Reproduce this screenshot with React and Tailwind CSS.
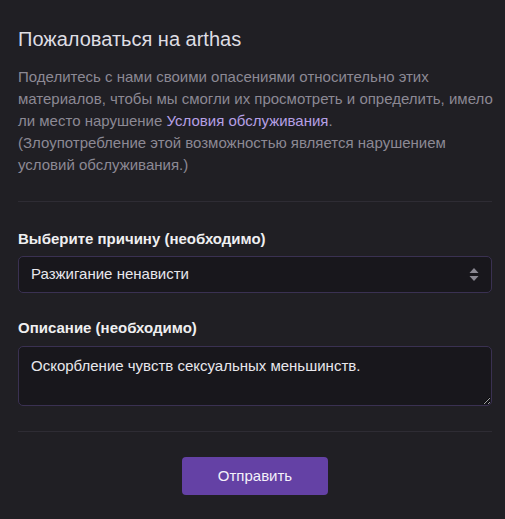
import React, { useState } from 'react';

const reasons = ['Разжигание ненависти', 'Спам', 'Насилие', 'Другое'];

export default function App() {
  const [reason, setReason] = useState(reasons[0]);
  const [text, setText] = useState('Оскорбление чувств сексуальных меньшинств.');

  return (
    <div className="min-h-[519px] bg-[#201f24] pl-[18px] pr-[13px] pt-[26px] pb-6 font-['Liberation_Sans',Arial,sans-serif] scheme-dark">
      <h1 className="text-[20px] leading-[26px] text-[#dedde3]">Пожаловаться на arthas</h1>

      <p className="mt-[14px] -mr-[8px] text-[15px] leading-[22px] text-[#8c8994]">
        Поделитесь с нами своими опасениями относительно этих материалов, чтобы мы смогли их
        просмотреть и определить, имело ли место нарушение{' '}
        <a href="#" className="text-[#b6a0e4]">Условия обслуживания</a>.
        <br />
        (Злоупотребление этой возможностью является нарушением условий обслуживания.)
      </p>

      <div className="mt-[25px] h-px bg-[#2e2c34]" />

      <label className="mt-[27px] block text-[15px] leading-5 font-bold text-[#efeff1]">
        Выберите причину (необходимо)
      </label>
      <div className="relative mt-[7px]">
        <select
          value={reason}
          onChange={(e) => setReason(e.target.value)}
          className="h-[37px] w-full appearance-none rounded-[5px] border border-[#3a3152] bg-[#18171c] px-3 text-[15px] text-[#e8e7ec] outline-none"
        >
          {reasons.map((r) => (
            <option key={r}>{r}</option>
          ))}
        </select>
        <svg className="pointer-events-none absolute right-[13px] top-[12px]" width="10" height="13" viewBox="0 0 10 13">
          <path d="M5 0 L9.5 5 L0.5 5 Z" fill="#8a8892" />
          <path d="M5 13 L9.5 8 L0.5 8 Z" fill="#8a8892" />
        </svg>
      </div>

      <label className="mt-[25px] block text-[15px] leading-5 font-bold text-[#efeff1]">
        Описание (необходимо)
      </label>
      <textarea
        value={text}
        onChange={(e) => setText(e.target.value)}
        className="mt-2 block h-[60px] w-full resize-y rounded-[5px] border border-[#3a3152] bg-[#18171c] px-3 py-[9px] text-[15px] leading-5 text-[#e8e7ec] outline-none"
      />

      <div className="mt-[25px] h-px bg-[#2e2c34]" />

      <div className="mt-[25px] flex justify-center">
        <button className="h-[38px] w-[146px] rounded-[4px] bg-[#6441a5] text-[15px] text-[#f4f1fa]">
          Отправить
        </button>
      </div>
    </div>
  );
}
